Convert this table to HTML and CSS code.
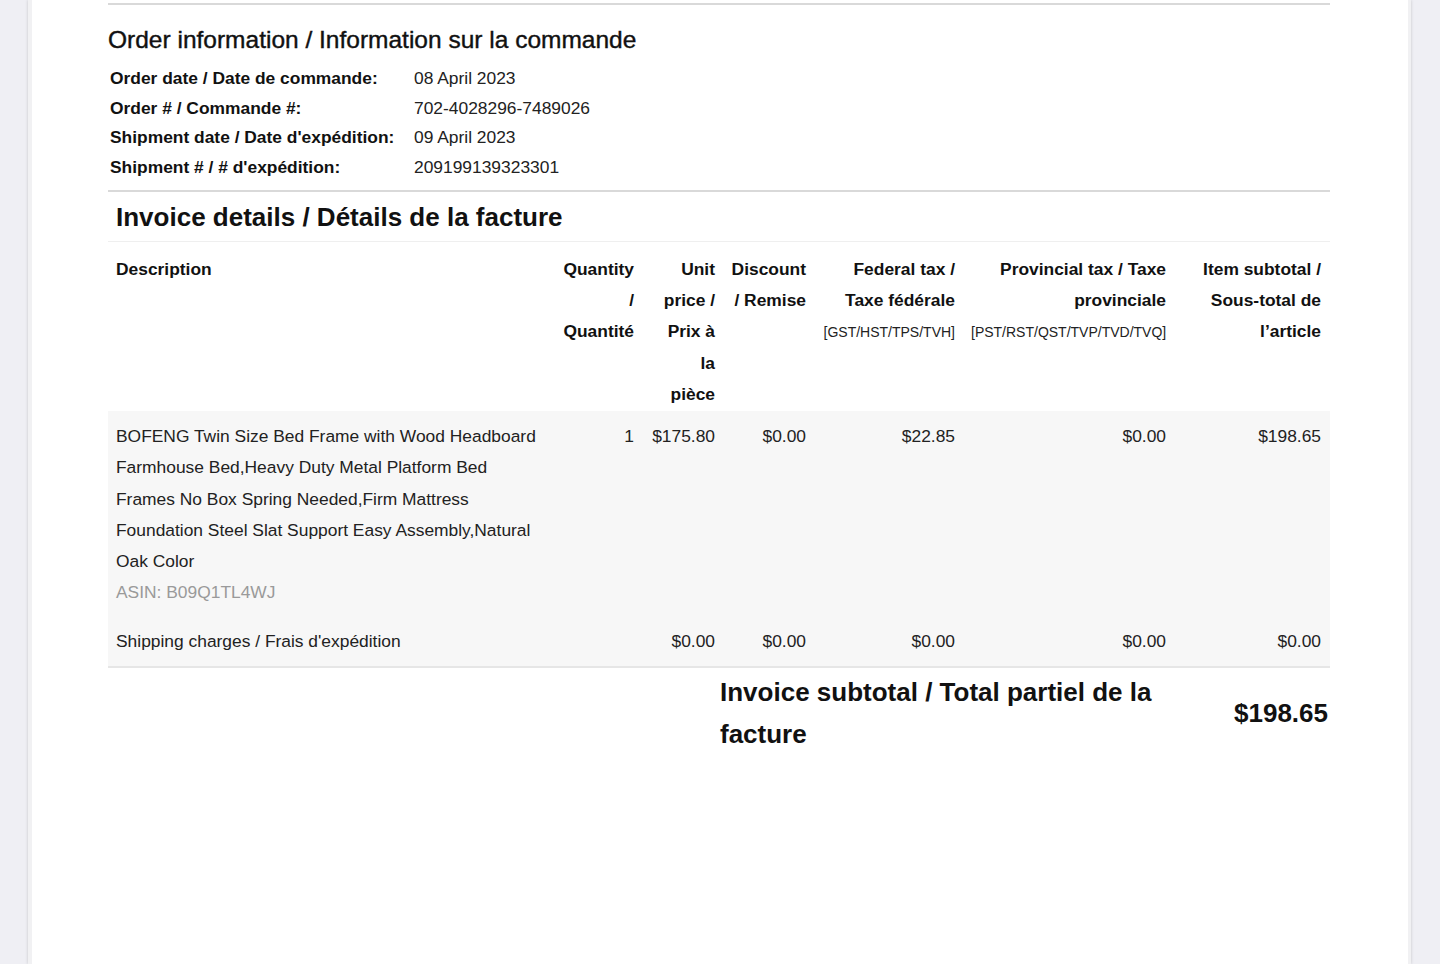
FILE: index.html
```html
<!DOCTYPE html>
<html lang="en">
<head>
<meta charset="utf-8">
<title>Invoice</title>
<link rel="stylesheet" href="styles.css">
</head>
<body>
<div class="viewer">
  <main class="page">
    <div class="rule rule-strong"></div>

    <section class="order-info">
      <h2 class="order-title">Order information / Information sur la commande</h2>
      <dl class="order-grid">
        <dt>Order date / Date de commande:</dt><dd>08 April 2023</dd>
        <dt>Order # / Commande #:</dt><dd>702-4028296-7489026</dd>
        <dt>Shipment date / Date d'expédition:</dt><dd>09 April 2023</dd>
        <dt>Shipment # / # d'expédition:</dt><dd>209199139323301</dd>
      </dl>
    </section>

    <div class="rule rule-strong rule-gap"></div>

    <h2 class="invoice-title">Invoice details / Détails de la facture</h2>

    <table class="items">
      <colgroup>
        <col class="c-desc"><col class="c-qty"><col class="c-unit"><col class="c-disc"><col class="c-fed"><col class="c-prov"><col class="c-sub">
      </colgroup>
      <thead>
        <tr>
          <th class="left">Description</th>
          <th class="qty">Quantity / Quantité</th>
          <th class="unit">Unit price / Prix à la pièce</th>
          <th class="disc">Discount / Remise</th>
          <th>Federal tax / Taxe fédérale<br><span class="tax-codes">[GST/HST/TPS/TVH]</span></th>
          <th>Provincial tax / Taxe provinciale<br><span class="tax-codes">[PST/RST/QST/TVP/TVD/TVQ]</span></th>
          <th class="sub">Item subtotal / Sous-total de l’article</th>
        </tr>
      </thead>
      <tbody>
        <tr class="first">
          <td class="left">BOFENG Twin Size Bed Frame with Wood Headboard Farmhouse Bed,Heavy Duty Metal Platform Bed Frames No Box Spring Needed,Firm Mattress Foundation Steel Slat Support Easy Assembly,Natural Oak Color<br><span class="asin">ASIN: B09Q1TL4WJ</span></td>
          <td class="qty">1</td>
          <td class="unit">$175.80</td>
          <td class="disc">$0.00</td>
          <td>$22.85</td>
          <td>$0.00</td>
          <td class="sub">$198.65</td>
        </tr>
        <tr class="last">
          <td class="left">Shipping charges / Frais d'expédition</td>
          <td class="qty"></td>
          <td class="unit">$0.00</td>
          <td class="disc">$0.00</td>
          <td>$0.00</td>
          <td>$0.00</td>
          <td class="sub">$0.00</td>
        </tr>
      </tbody>
    </table>

    <div class="totals">
      <div class="totals-label">Invoice subtotal / Total partiel de la facture</div>
      <div class="totals-value">$198.65</div>
    </div>
  </main>
</div>
</body>
</html>
```

FILE: styles.css
```css
html, body {
  margin: 0;
  padding: 0;
  height: 964px;
  overflow: hidden;
  background: #efeff4;
}

body {
  font-family: "Liberation Sans", Arial, Helvetica, sans-serif;
  color: #111;
}

.viewer {
  display: flex;
  height: 964px;
}

.page {
  box-sizing: border-box;
  width: 1383px;
  margin-left: 28px;
  height: 964px;
  background: #fff;
  border-left: 4px solid #f1f1f3;
  border-right: 3px solid #f1f1f3;
  box-shadow: 0 0 3px rgba(0, 0, 0, 0.18);
  padding: 0 78px 0 76px;
}

.rule {
  height: 2px;
}

.rule-strong {
  background: #d9d9d9;
  margin-top: 3px;
}

.rule-gap {
  margin-top: 7px;
}

.order-title {
  margin: 20px 0 0;
  font-size: 24.5px;
  line-height: 30px;
  font-weight: 400;
  -webkit-text-stroke: 0.4px #111;
  color: #111;
}

.order-grid {
  margin: 9px 0 0;
  display: grid;
  grid-template-columns: 304px auto;
  font-size: 17.4px;
  line-height: 29.7px;
}

.order-grid dt {
  font-weight: 700;
  padding-left: 2px;
  color: #111;
}

.order-grid dd {
  margin: 0 0 0 2px;
  color: #222;
}

.invoice-title {
  margin: 8px 0 0;
  padding: 0 0 7px 8px;
  font-size: 26px;
  line-height: 34px;
  font-weight: 700;
  color: #111;
  border-bottom: 1px solid #efefef;
}

.items {
  width: 1222px;
  table-layout: fixed;
  border-collapse: collapse;
  font-size: 17.4px;
  line-height: 31.25px;
}

.c-desc { width: 448px; }
.c-qty { width: 86px; }
.c-unit { width: 81px; }
.c-disc { width: 91px; }
.c-fed { width: 149px; }
.c-prov { width: 211px; }
.c-sub { width: 156px; }

.items th,
.items td {
  vertical-align: top;
  text-align: right;
  padding: 0 8px;
}

.items th {
  font-weight: 700;
  color: #111;
  padding-top: 12px;
  padding-bottom: 1px;
}

.items td {
  font-weight: 400;
  color: #222;
  padding-top: 9px;
  padding-bottom: 9px;
}

.items tr.first td {
  padding-top: 10px;
  padding-bottom: 8px;
}

.items .left {
  text-align: left;
}

.items .qty {
  padding-left: 4px;
}

.items .unit {
  padding-left: 10px;
}

.items .disc {
  padding-left: 4px;
}

.items .sub {
  padding-right: 9px;
}

.tax-codes {
  font-weight: 400;
  font-size: 14px;
  white-space: nowrap;
  color: #222;
}

.items tbody tr {
  background: #f7f7f7;
}

.items tbody tr.last {
  border-bottom: 2px solid #e6e6e6;
}

.asin {
  color: #9a9a9a;
}

.totals {
  display: flex;
  justify-content: flex-end;
  align-items: center;
  margin-top: 3px;
  padding-right: 2px;
  font-size: 26px;
  line-height: 42px;
  font-weight: 700;
  color: #111;
}

.totals-label {
  width: 470px;
}

.totals-value {
  width: 138px;
  text-align: right;
}
```
